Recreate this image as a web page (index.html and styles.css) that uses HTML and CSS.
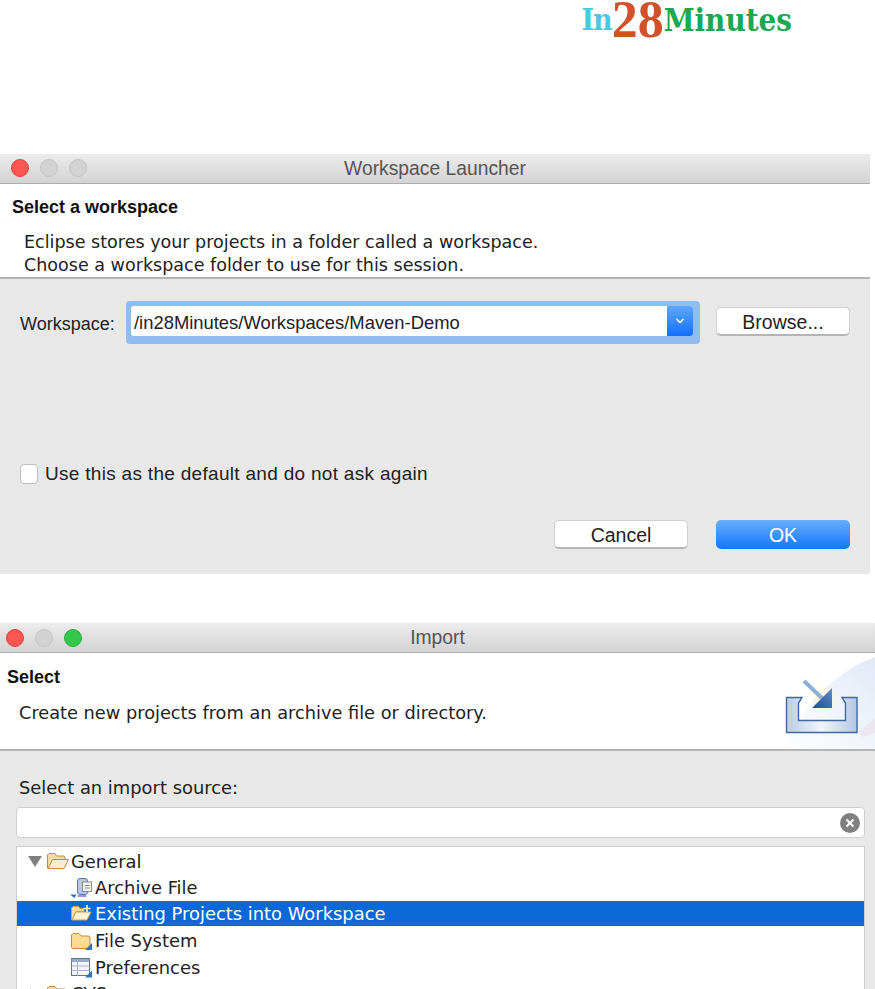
FILE: index.html
```html
<!DOCTYPE html>
<html lang="en">
<head>
    <meta charset="UTF-8">
    <title>Eclipse - Import Maven Project</title>
    <link rel="stylesheet" href="styles.css">
</head>
<body>
  <div class="logo-bar">
      <div class="logo"><span class="logo-in">In</span><span class="logo-num">28</span><span class="logo-min">Minutes</span></div>
  </div>

  <div class="window launcher">
      <div class="titlebar">
          <div class="lights">
              <span class="light red"></span>
              <span class="light gray"></span>
              <span class="light gray"></span>
          </div>
          <p class="title">Workspace Launcher</p>
      </div>
      <div class="head launcher-head">
          <h2 class="head-title">Select a workspace</h2>
          <p class="head-text">Eclipse stores your projects in a folder called a workspace.<br>Choose a workspace folder to use for this session.</p>
      </div>
      <div class="panel launcher-panel">
          <div class="workspace-row">
              <label class="field-label">Workspace:</label>
              <div class="combo-ring">
                  <div class="combo">
                      <span class="combo-text">/in28Minutes/Workspaces/Maven-Demo</span>
                      <span class="combo-arrow">
                          <svg width="10" height="6" viewBox="0 0 10 6"><path d="M1.5 1l3.5 3.5L8.5 1" fill="none" stroke="#fff" stroke-width="1.5"/></svg>
                      </span>
                  </div>
              </div>
              <button class="btn browse">Browse...</button>
          </div>
          <div class="check-row">
              <span class="checkbox"></span>
              <span class="check-label">Use this as the default and do not ask again</span>
          </div>
          <div class="actions">
              <button class="btn">Cancel</button>
              <button class="btn btn-primary">OK</button>
          </div>
      </div>
  </div>

  <div class="window import">
      <div class="titlebar">
          <div class="lights lights-import">
              <span class="light red"></span>
              <span class="light gray"></span>
              <span class="light green"></span>
          </div>
          <p class="title">Import</p>
      </div>
      <div class="head import-head">
          <h2 class="head-title">Select</h2>
          <p class="head-text">Create new projects from an archive file or directory.</p>
          <svg class="import-icon" width="135" height="96" viewBox="0 0 135 96">
              <defs>
                  <linearGradient id="swoosh" x1="0" y1="1" x2="1" y2="0">
                      <stop offset="0" stop-color="#fff"/>
                      <stop offset="1" stop-color="#e2e9f6"/>
                  </linearGradient>
                  <linearGradient id="tray" x1="0" y1="0" x2="1" y2="0">
                      <stop offset="0" stop-color="#bccde6"/>
                      <stop offset=".5" stop-color="#f1f4fa"/>
                      <stop offset="1" stop-color="#b4c7e2"/>
                  </linearGradient>
                  <linearGradient id="arrow" x1="0" y1="1" x2="1" y2="0">
                      <stop offset="0" stop-color="#1f4f96"/>
                      <stop offset="1" stop-color="#5f8cc4"/>
                  </linearGradient>
                  <radialGradient id="glow">
                      <stop offset="0" stop-color="#fbf6c4"/>
                      <stop offset="1" stop-color="#fbf6c4" stop-opacity="0"/>
                  </radialGradient>
              </defs>
              <path d="M135 4C100 16 62 50 43 96H135z" fill="url(#swoosh)"/>
              <path d="M118 78L135 66V80L122 84z" fill="#e6d5dc" opacity=".35"/>
              <circle cx="84" cy="46" r="14" fill="url(#glow)"/>
              <path d="M46.500 44.500H62L58.500 50V67.500H105.500V50L102 44.500H117V79.500H46.500z" fill="url(#tray)" stroke="#41699f" stroke-width="1.400"/>
              <path d="M64 28L84 47" stroke="#8fb0d6" stroke-width="4"/>
              <path d="M92 35V55H72z" fill="url(#arrow)"/>
          </svg>
      </div>
      <div class="panel import-panel">
          <p class="source-label">Select an import source:</p>
          <div class="filter">
              <span class="filter-clear">
                  <svg width="10" height="10" viewBox="0 0 10 10"><path d="M1.5 1.5l7 7M8.5 1.5l-7 7" stroke="#fff" stroke-width="2"/></svg>
              </span>
          </div>
          <div class="tree">
              <div class="tree-row depth-0">
                  <span class="twisty-open"></span>
                  <svg class="tree-icon" width="24" height="20" viewBox="0 0 24 20"><path d="M1.500 17V4L3 2.500h6L10.500 5H18l1 1v3H7L2 17.500z" fill="#f3dca6" stroke="#c08f3f"/><path d="M2 17.500L6.500 8.500H22.500L18 17.500z" fill="#fbeec9" stroke="#c08f3f"/></svg>
                  <span class="tree-text">General</span>
              </div>
              <div class="tree-row depth-1">
                  <svg class="tree-icon" width="24" height="22" viewBox="0 0 24 22"><path d="M1 17.500h6.500L5.500 21z" fill="#2f72b8"/><rect x="8.500" y="1.500" width="10" height="16" rx="2.500" fill="#b9c8e2" stroke="#5c76a4"/><rect x="8.500" y="18" width="9" height="2" fill="#8fa4c8"/><rect x="13.500" y="5" width="9" height="9.500" fill="#f4f4ee" stroke="#8a8f6c"/><path d="M16 8.500h4.500M16 11h4.500" stroke="#8a8f6c"/></svg>
                  <span class="tree-text">Archive File</span>
              </div>
              <div class="tree-row depth-1 selected">
                  <svg class="tree-icon" width="24" height="20" viewBox="0 0 24 20"><path d="M2.500 15.500V4L4 2.500h5.500L11 4.500h4v3H7L3 16z" fill="#f1dca8" stroke="#c7a356"/><path d="M3 16L7 8H22L18 16z" fill="#fdf3d2" stroke="#c7a356"/><path d="M18 1v7M14.500 4.500h7" stroke="#fff6c8" stroke-width="1.600"/></svg>
                  <span class="tree-text">Existing Projects into Workspace</span>
              </div>
              <div class="tree-row depth-1">
                  <svg class="tree-icon" width="24" height="20" viewBox="0 0 24 20"><path d="M2.500 16.500V4L4 2.500h6L12 5h8l1 1v10.500l-1 1H3.500z" fill="#f8dc94" stroke="#c08f3f"/><path d="M16 19l7-7v7z" fill="#2f72b8"/></svg>
                  <span class="tree-text">File System</span>
              </div>
              <div class="tree-row depth-1">
                  <svg class="tree-icon" width="24" height="21" viewBox="0 0 24 21"><rect x="2.500" y="1.500" width="18" height="17" fill="#f3f5fa" stroke="#5f6f92"/><path d="M2.500 2h18v3h-18z" fill="#9aa9c6"/><path d="M2.500 9h18M2.500 13.500h18M8.500 5v13.500" stroke="#a9b3ca"/><path d="M16 20.500l7-7v7z" fill="#2f72b8"/></svg>
                  <span class="tree-text">Preferences</span>
              </div>
              <div class="tree-row depth-0">
                  <span class="twisty-closed"></span>
                  <svg class="tree-icon" width="24" height="20" viewBox="0 0 24 20"><path d="M1.500 17V4L3 2.500h6L11 5h8l1 1v11l-1 1H2.500z" fill="#f8dc94" stroke="#c08f3f"/></svg>
                  <span class="tree-text">CVS</span>
              </div>
          </div>
      </div>
  </div>
</body>
</html>
```

FILE: styles.css
```css
/* General */

html
{
    height: 989px;
    overflow: hidden;
    background-color: white;
}
*
{
    box-sizing: border-box;
    margin: 0;
    padding: 0;
    font-family: "Liberation Sans", Arial, sans-serif;
    color: #222;
}

/* Logo */

.logo-bar
{
    height: 154px;
    display: flex;
    justify-content: flex-end;
    padding: 0 83px 0 0;
}
.logo
{
    display: flex;
    align-items: flex-start;
    height: 42px;
    font-weight: 700;
    line-height: 1;
}
.logo span
{
    font-family: "DejaVu Serif", serif;
    font-stretch: condensed;
    font-weight: 700;
    font-size: 31px;
    margin-top: 5px;
}
.logo .logo-in
{
    letter-spacing: -1px;
    font-size: 30px;
    color: #4fc6de;
}
.logo .logo-num
{
    font-family: "Liberation Serif", serif;
    font-stretch: normal;
    font-size: 52px;
    line-height: 0.78;
    margin-top: 0;
    color: #d2502a;
}
.logo .logo-min
{
    color: #1da750;
}

/* Windows */

.window
{
    overflow: hidden;
}
.launcher
{
    width: 870px;
    height: 420px;
    margin-bottom: 49px;
}
.import
{
    width: 875px;
}
.titlebar
{
    height: 30px;
    display: flex;
    align-items: center;
    justify-content: center;
    position: relative;
    background: linear-gradient(#ececec, #d3d3d3);
    border-bottom: 1px solid #adadad;
}
.lights
{
    position: absolute;
    left: 11px;
    top: 5px;
    display: flex;
    gap: 11px;
}
.lights-import
{
    left: 6px;
    top: 6px;
}
.light
{
    width: 18px;
    height: 18px;
    border-radius: 50%;
}
.red
{
    background-color: #fc5753;
    border: 1px solid #e0443e;
}
.gray
{
    background-color: #d2d2d2;
    border: 1px solid #c4c4c4;
}
.green
{
    background-color: #34c84a;
    border: 1px solid #2aac3c;
}
.title
{
    font-size: 19.300px;
    color: #555;
}

/* Header area */

.head
{
    background-color: white;
    border-bottom: 2px solid #b4b4b4;
    position: relative;
}
.launcher-head
{
    height: 95px;
    padding: 13px 12px 0;
}
.import-head
{
    height: 98px;
    padding: 14px 7px 0;
}
.head-title
{
    font-size: 18px;
    font-weight: 700;
    line-height: 20px;
    color: #111;
}
.head-text
{
    font-family: "DejaVu Sans", sans-serif;
    font-size: 17.550px;
    line-height: 23px;
    margin: 14px 0 0 12px;
}
.import-head .head-text
{
    font-size: 17.750px;
    margin-top: 15px;
}
.import-icon
{
    position: absolute;
    right: 0;
    top: 0;
}

/* Panels */

.panel
{
    background-color: #e8e8e8;
}
.launcher-panel
{
    height: 296px;
    padding: 22px 20px 0;
}
.workspace-row
{
    display: flex;
    align-items: flex-start;
}
.field-label
{
    width: 106px;
    margin-top: 12px;
    font-size: 18px;
    line-height: 22px;
}
.combo-ring
{
    width: 574px;
    height: 43px;
    padding: 5px 7px 8px 5px;
    border-radius: 4px;
    background-color: #8fbdf0;
}
.combo
{
    height: 30px;
    display: flex;
    align-items: center;
    justify-content: space-between;
    background-color: white;
    border-radius: 3px;
    overflow: hidden;
}
.combo-text
{
    padding: 3px 0 0 3px;
    font-size: 18.400px;
}
.combo-arrow
{
    width: 26px;
    height: 30px;
    display: flex;
    align-items: center;
    justify-content: center;
    background: linear-gradient(#5fa8fb, #116ffb);
}
.btn
{
    width: 134px;
    height: 29px;
    padding-top: 2px;
    font-size: 19.500px;
    background-color: white;
    border: 1px solid #cfcfcf;
    border-bottom: 2px solid #b5b5b5;
    border-radius: 5px;
}
.browse
{
    margin: 6px 0 0 16px;
}
.check-row
{
    display: flex;
    align-items: center;
    gap: 7px;
    margin-top: 119px;
}
.checkbox
{
    width: 18px;
    height: 20px;
    background-color: white;
    border: 1px solid #bdbdbd;
    border-radius: 4px;
}
.check-label
{
    font-size: 19px;
    letter-spacing: 0.300px;
}
.actions
{
    display: flex;
    justify-content: flex-end;
    gap: 28px;
    margin-top: 35px;
}
.btn-primary
{
    color: white;
    border: 0;
    background: linear-gradient(#69aefb, #1477fb);
}

/* Import */

.import-panel
{
    padding: 27px 10px 0 16px;
    height: 240px;
}
.source-label
{
    font-family: "DejaVu Sans", sans-serif;
    font-size: 17.900px;
    line-height: 20px;
    padding-left: 3px;
}
.filter
{
    height: 31px;
    margin-top: 9px;
    display: flex;
    align-items: center;
    justify-content: flex-end;
    padding-right: 4px;
    background-color: white;
    border: 1px solid #cfcfcf;
    border-radius: 4px;
}
.filter-clear
{
    width: 20px;
    height: 20px;
    display: flex;
    align-items: center;
    justify-content: center;
    border-radius: 50%;
    background-color: #808080;
}
.tree
{
    margin-top: 8px;
    height: 150px;
    padding-top: 1px;
    background-color: white;
    border: 1px solid #cfcfcf;
}
.tree-row
{
    height: 26.500px;
    display: flex;
    align-items: center;
}
.depth-0
{
    padding-left: 11px;
}
.depth-1
{
    padding-left: 52px;
}
.tree-icon
{
    flex: none;
    margin-right: 2px;
}
.depth-0 .tree-icon
{
    margin-left: 4px;
    margin-right: 1px;
}
.tree-text
{
    font-family: "DejaVu Sans", sans-serif;
    font-size: 17.900px;
}
.selected
{
    height: 25px;
    margin-bottom: 1.500px;
    background-color: #0a68d8;
}
.selected .tree-text
{
    color: white;
}
.twisty-open
{
    width: 0;
    height: 0;
    border-left: 7px solid transparent;
    border-right: 7px solid transparent;
    border-top: 11px solid #808080;
}
.twisty-closed
{
    width: 0;
    height: 0;
    margin: 0 6px 0 2px;
    border-top: 6px solid transparent;
    border-bottom: 6px solid transparent;
    border-left: 6px solid #909090;
}
```
